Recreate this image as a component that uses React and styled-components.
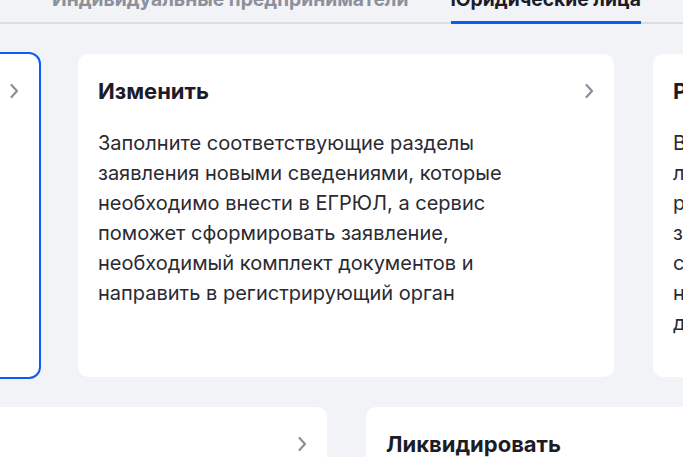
import React from 'react'
import styled, { createGlobalStyle } from 'styled-components'

const GlobalStyle = createGlobalStyle`
  body {
    margin: 0;
    background: #f2f3f7;
    font-family: Inter, "Noto Sans", sans-serif;
    overflow: hidden;
  }
`

const Page = styled.div`
  height: 457px;
  overflow: hidden;
`

const TabBar = styled.div`
  display: flex;
  gap: 42px;
  padding-left: 52px;
  margin-top: -13px;
  border-bottom: 2px solid #dcdde3;
`

const Tab = styled.div`
  position: relative;
  font-size: 19.3px;
  font-weight: 700;
  line-height: 24px;
  padding-bottom: 11px;
  white-space: nowrap;
  color: ${p => (p.$active ? '#1c1c28' : '#8b909b')};
  &::after {
    content: '';
    display: ${p => (p.$active ? 'block' : 'none')};
    position: absolute;
    left: 0;
    right: 0;
    bottom: -2px;
    height: 3px;
    background: #0a5cf5;
  }
`

const CardRow = styled.div`
  display: flex;
  gap: 39px;
  margin-top: 30px;
  margin-left: ${p => p.$shift}px;
`

const Card = styled.div`
  flex: 0 0 536px;
  box-sizing: border-box;
  height: 323px;
  padding: 23px 20px;
  background: #fff;
  border-radius: 10px;
  box-shadow: ${p => (p.$selected ? '0 0 0 2px #0a5cf5' : 'none')};
`

const CardHead = styled.div`
  display: flex;
  align-items: center;
  justify-content: space-between;
`

const Title = styled.div`
  font-size: 22px;
  font-weight: 700;
  line-height: 28px;
  color: #1c1c28;
`

const Text = styled.p`
  margin: 23px 0 0;
  font-size: 20px;
  line-height: 30px;
  color: #2a2a33;
  white-space: nowrap;
`

const Chevron = () => (
  <svg width="10" height="16" viewBox="0 0 10 16">
    <path
      d="M2.5 2 L8 8 L2.5 14"
      fill="none"
      stroke="#8a8f99"
      strokeWidth="2.2"
      strokeLinecap="round"
      strokeLinejoin="round"
    />
  </svg>
)

const ActionCard = ({ title, lines, selected }) => (
  <Card $selected={selected}>
    <CardHead>
      <Title>{title}</Title>
      <Chevron />
    </CardHead>
    <Text>
      {lines.map((line, i) => (
        <React.Fragment key={i}>
          {line}
          {i < lines.length - 1 && <br />}
        </React.Fragment>
      ))}
    </Text>
  </Card>
)

const topRow = [
  {
    title: 'Зарегистрировать',
    selected: true,
    lines: [
      'Заполните заявление о регистрации',
      'юридического лица, а сервис поможет',
      'сформировать необходимый комплект',
      'документов и направить его',
      'в регистрирующий орган',
    ],
  },
  {
    title: 'Изменить',
    lines: [
      'Заполните соответствующие разделы',
      'заявления новыми сведениями, которые',
      'необходимо внести в ЕГРЮЛ, а сервис',
      'поможет сформировать заявление,',
      'необходимый комплект документов и',
      'направить в регистрирующий орган',
    ],
  },
  {
    title: 'Реорганизовать',
    lines: [
      'Выберите форму реорганизации',
      'лица, заполните заявление, и сервис',
      'разместит сведения о принятом',
      'заявителем решении, сформирует',
      'сообщение о реорганизации и',
      'направит пакет документов в',
      'действующий регистрирующий орган',
    ],
  },
]

const bottomRow = [
  {
    title: 'Прекратить',
    lines: ['Заполните заявление о прекращении', 'деятельности юридического лица'],
  },
  {
    title: 'Ликвидировать',
    lines: ['Заполните заявление о ликвидации', 'юридического лица'],
  },
]

export default function App() {
  return (
    <Page>
      <GlobalStyle />
      <TabBar>
        <Tab>Индивидуальные предприниматели</Tab>
        <Tab $active>Юридические лица</Tab>
      </TabBar>
      <CardRow $shift={-497}>
        {topRow.map(c => (
          <ActionCard key={c.title} {...c} />
        ))}
      </CardRow>
      <CardRow $shift={-209}>
        {bottomRow.map(c => (
          <ActionCard key={c.title} {...c} />
        ))}
      </CardRow>
    </Page>
  )
}
